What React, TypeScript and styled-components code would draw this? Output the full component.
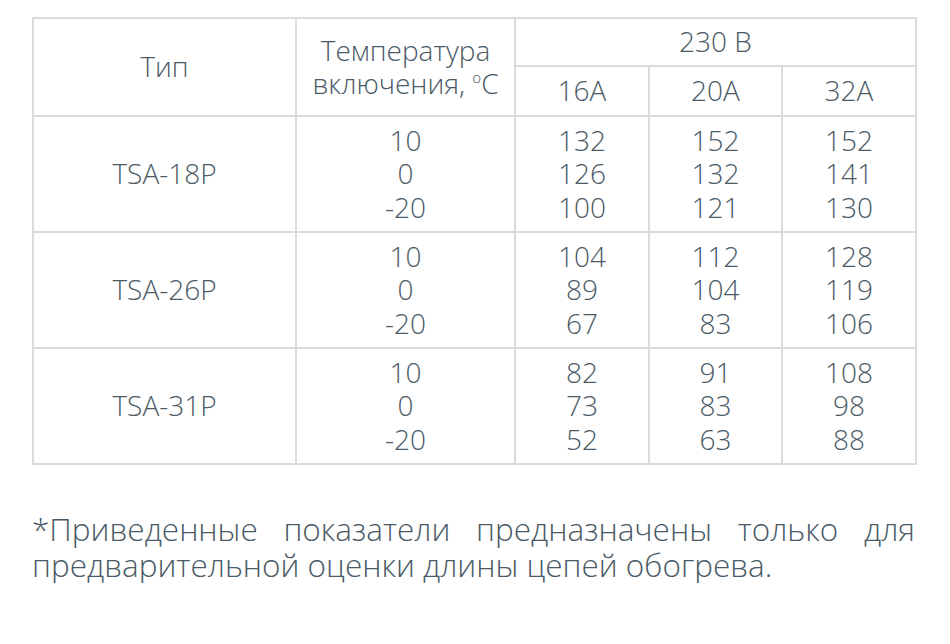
import styled, { createGlobalStyle } from "styled-components";

const GlobalStyle = createGlobalStyle`
    body {
        margin: 0;
        background: #ffffff;
        font-family: "Open Sans", "Liberation Sans", sans-serif;
        font-weight: 300;
        color: #4a5a66;
    }
`;

const Page = styled.div`
    padding: 17px 35px 0 32px;
    width: 883px;
`;

const Table = styled.table`
    border-collapse: collapse;
    width: 883px;
    table-layout: fixed;
    font-size: 28px;
    line-height: 33.5px;
`;

const Cell = styled.td<{ $h?: number }>`
    border: 2px solid #d8dcdf;
    text-align: center;
    vertical-align: middle;
    padding: 0;
    height: ${(p) => (p.$h ? `${p.$h}px` : "auto")};
`;

const HeadCell = styled(Cell).attrs({ as: "th" })`
    font-weight: 300;
`;

const Sup = styled.sup`
    font-size: 15px;
    line-height: 0;
    vertical-align: 11px;
`;

const Note = styled.p`
    margin: 46px 0 0;
    font-size: 31.5px;
    line-height: 36px;
    text-align: justify;
    text-align-last: left;
`;

type Row = { type: string; temps: string[]; values: string[][] };

const rows: Row[] = [
    { type: "TSA-18P", temps: ["10", "0", "-20"], values: [["132", "126", "100"], ["152", "132", "121"], ["152", "141", "130"]] },
    { type: "TSA-26P", temps: ["10", "0", "-20"], values: [["104", "89", "67"], ["112", "104", "83"], ["128", "119", "106"]] },
    { type: "TSA-31P", temps: ["10", "0", "-20"], values: [["82", "73", "52"], ["91", "83", "63"], ["108", "98", "88"]] },
];

function Lines({ items }: { items: string[] }) {
    return (
        <>
            {items.map((t, i) => (
                <div key={i}>{t}</div>
            ))}
        </>
    );
}

export default function App() {
    return (
        <>
            <GlobalStyle />
            <Page>
                <Table>
                    <colgroup>
                        <col style={{ width: 263 }} />
                        <col style={{ width: 219 }} />
                        <col style={{ width: 134 }} />
                        <col style={{ width: 133 }} />
                        <col style={{ width: 134 }} />
                    </colgroup>
                    <thead>
                        <tr>
                            <HeadCell rowSpan={2}>Тип</HeadCell>
                            <HeadCell rowSpan={2}>
                                Температура
                                <br />
                                включения, <Sup>o</Sup>C
                            </HeadCell>
                            <HeadCell colSpan={3} $h={46}>230 В</HeadCell>
                        </tr>
                        <tr>
                            <HeadCell $h={48}>16A</HeadCell>
                            <HeadCell $h={48}>20A</HeadCell>
                            <HeadCell $h={48}>32A</HeadCell>
                        </tr>
                    </thead>
                    <tbody>
                        {rows.map((r) => (
                            <tr key={r.type}>
                                <Cell $h={114}>{r.type}</Cell>
                                <Cell>
                                    <Lines items={r.temps} />
                                </Cell>
                                {r.values.map((v, i) => (
                                    <Cell key={i}>
                                        <Lines items={v} />
                                    </Cell>
                                ))}
                            </tr>
                        ))}
                    </tbody>
                </Table>
                <Note>
                    *Приведенные показатели предназначены только для предварительной оценки длины цепей обогрева.
                </Note>
            </Page>
        </>
    );
}
